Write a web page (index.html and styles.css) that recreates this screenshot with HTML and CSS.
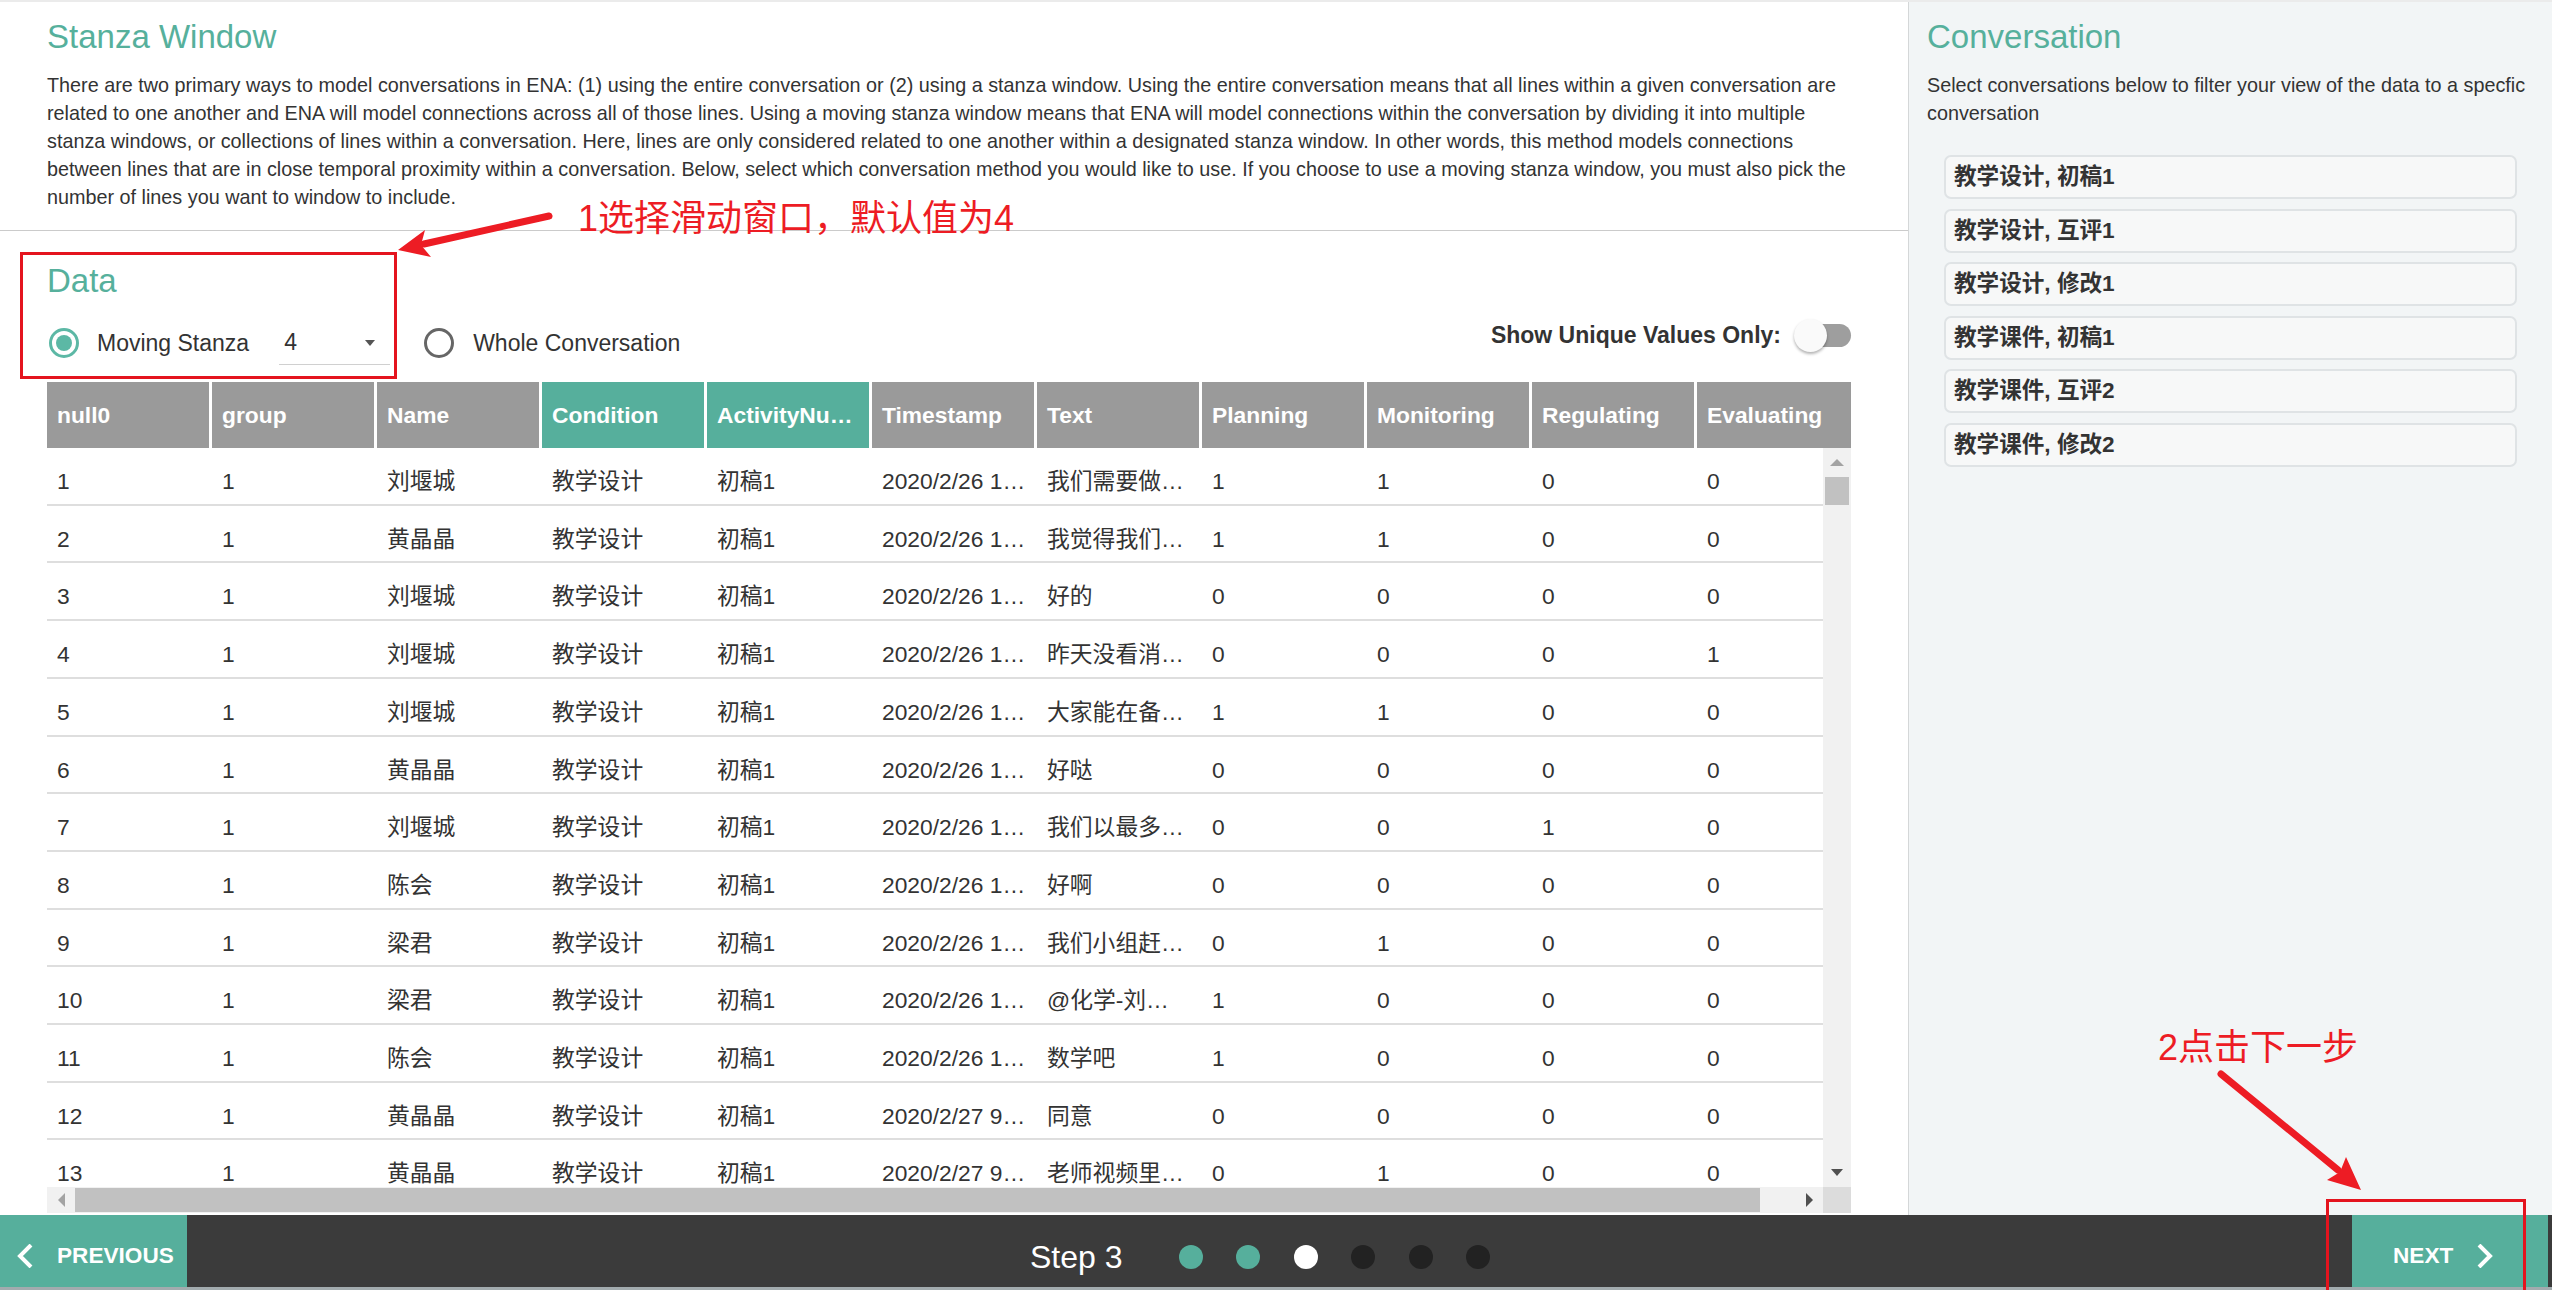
FILE: index.html
```html
<!DOCTYPE html>
<html lang="en">
<head>
<meta charset="utf-8">
<title>Stanza Window</title>
<link rel="stylesheet" href="styles.css">
</head>
<body>
<div class="app">
  <div class="main">
    <div class="left">
      <section class="intro-section">
        <h2 class="section-title">Stanza Window</h2>
        <p class="intro">There are two primary ways to model conversations in ENA: (1) using the entire conversation or (2) using a stanza window. Using the entire conversation means that all lines within a given conversation are related to one another and ENA will model connections across all of those lines. Using a moving stanza window means that ENA will model connections within the conversation by dividing it into multiple stanza windows, or collections of lines within a conversation. Here, lines are only considered related to one another within a designated stanza window. In other words, this method models connections between lines that are in close temporal proximity within a conversation. Below, select which conversation method you would like to use. If you choose to use a moving stanza window, you must also pick the number of lines you want to window to include.</p>
      </section>
      <hr class="divider">
      <section class="data-section">
        <h2 class="section-title">Data</h2>
        <div class="controls">
          <div class="mode-group">
            <label class="radio radio-checked"><span class="radio-ring"></span><span class="radio-label">Moving Stanza</span></label>
            <div class="select"><span class="select-value">4</span><span class="caret"></span></div>
            <label class="radio radio-whole"><span class="radio-ring"></span><span class="radio-label">Whole Conversation</span></label>
          </div>
          <div class="unique-toggle">
            <span class="toggle-label">Show Unique Values Only:</span>
            <span class="switch"><span class="switch-thumb"></span></span>
          </div>
        </div>
        <div class="grid">
          <div class="grid-head">
            <div class="hcell">null0</div>
            <div class="hcell">group</div>
            <div class="hcell">Name</div>
            <div class="hcell hcell-active">Condition</div>
            <div class="hcell hcell-active">ActivityNu…</div>
            <div class="hcell">Timestamp</div>
            <div class="hcell">Text</div>
            <div class="hcell">Planning</div>
            <div class="hcell">Monitoring</div>
            <div class="hcell">Regulating</div>
            <div class="hcell">Evaluating</div>
          </div>
          <div class="grid-body">
            <div class="rows">
              <div class="row"><div class="cell">1</div><div class="cell">1</div><div class="cell">刘堰城</div><div class="cell">教学设计</div><div class="cell">初稿1</div><div class="cell">2020/2/26 1…</div><div class="cell">我们需要做…</div><div class="cell">1</div><div class="cell">1</div><div class="cell">0</div><div class="cell">0</div></div>
              <div class="row"><div class="cell">2</div><div class="cell">1</div><div class="cell">黄晶晶</div><div class="cell">教学设计</div><div class="cell">初稿1</div><div class="cell">2020/2/26 1…</div><div class="cell">我觉得我们…</div><div class="cell">1</div><div class="cell">1</div><div class="cell">0</div><div class="cell">0</div></div>
              <div class="row"><div class="cell">3</div><div class="cell">1</div><div class="cell">刘堰城</div><div class="cell">教学设计</div><div class="cell">初稿1</div><div class="cell">2020/2/26 1…</div><div class="cell">好的</div><div class="cell">0</div><div class="cell">0</div><div class="cell">0</div><div class="cell">0</div></div>
              <div class="row"><div class="cell">4</div><div class="cell">1</div><div class="cell">刘堰城</div><div class="cell">教学设计</div><div class="cell">初稿1</div><div class="cell">2020/2/26 1…</div><div class="cell">昨天没看消…</div><div class="cell">0</div><div class="cell">0</div><div class="cell">0</div><div class="cell">1</div></div>
              <div class="row"><div class="cell">5</div><div class="cell">1</div><div class="cell">刘堰城</div><div class="cell">教学设计</div><div class="cell">初稿1</div><div class="cell">2020/2/26 1…</div><div class="cell">大家能在备…</div><div class="cell">1</div><div class="cell">1</div><div class="cell">0</div><div class="cell">0</div></div>
              <div class="row"><div class="cell">6</div><div class="cell">1</div><div class="cell">黄晶晶</div><div class="cell">教学设计</div><div class="cell">初稿1</div><div class="cell">2020/2/26 1…</div><div class="cell">好哒</div><div class="cell">0</div><div class="cell">0</div><div class="cell">0</div><div class="cell">0</div></div>
              <div class="row"><div class="cell">7</div><div class="cell">1</div><div class="cell">刘堰城</div><div class="cell">教学设计</div><div class="cell">初稿1</div><div class="cell">2020/2/26 1…</div><div class="cell">我们以最多…</div><div class="cell">0</div><div class="cell">0</div><div class="cell">1</div><div class="cell">0</div></div>
              <div class="row"><div class="cell">8</div><div class="cell">1</div><div class="cell">陈会</div><div class="cell">教学设计</div><div class="cell">初稿1</div><div class="cell">2020/2/26 1…</div><div class="cell">好啊</div><div class="cell">0</div><div class="cell">0</div><div class="cell">0</div><div class="cell">0</div></div>
              <div class="row"><div class="cell">9</div><div class="cell">1</div><div class="cell">梁君</div><div class="cell">教学设计</div><div class="cell">初稿1</div><div class="cell">2020/2/26 1…</div><div class="cell">我们小组赶…</div><div class="cell">0</div><div class="cell">1</div><div class="cell">0</div><div class="cell">0</div></div>
              <div class="row"><div class="cell">10</div><div class="cell">1</div><div class="cell">梁君</div><div class="cell">教学设计</div><div class="cell">初稿1</div><div class="cell">2020/2/26 1…</div><div class="cell">@化学-刘…</div><div class="cell">1</div><div class="cell">0</div><div class="cell">0</div><div class="cell">0</div></div>
              <div class="row"><div class="cell">11</div><div class="cell">1</div><div class="cell">陈会</div><div class="cell">教学设计</div><div class="cell">初稿1</div><div class="cell">2020/2/26 1…</div><div class="cell">数学吧</div><div class="cell">1</div><div class="cell">0</div><div class="cell">0</div><div class="cell">0</div></div>
              <div class="row"><div class="cell">12</div><div class="cell">1</div><div class="cell">黄晶晶</div><div class="cell">教学设计</div><div class="cell">初稿1</div><div class="cell">2020/2/27 9…</div><div class="cell">同意</div><div class="cell">0</div><div class="cell">0</div><div class="cell">0</div><div class="cell">0</div></div>
              <div class="row"><div class="cell">13</div><div class="cell">1</div><div class="cell">黄晶晶</div><div class="cell">教学设计</div><div class="cell">初稿1</div><div class="cell">2020/2/27 9…</div><div class="cell">老师视频里…</div><div class="cell">0</div><div class="cell">1</div><div class="cell">0</div><div class="cell">0</div></div>
            </div>
            <div class="vscroll">
              <span class="arrow-up"></span>
              <span class="vthumb"></span>
              <span class="vspacer"></span>
              <span class="arrow-down"></span>
            </div>
          </div>
          <div class="hscroll">
            <span class="harrow"><span class="arrow-left"></span></span>
            <span class="hthumb"></span>
            <span class="harrow harrow-right"><span class="arrow-right"></span></span>
            <span class="hcorner"></span>
          </div>
        </div>
      </section>
    </div>
    <aside class="right">
      <h2 class="section-title">Conversation</h2>
      <p class="conv-desc">Select conversations below to filter your view of the data to a specfic conversation</p>
      <ul class="conv-list">
        <li class="conv-item">教学设计, 初稿1</li>
        <li class="conv-item">教学设计, 互评1</li>
        <li class="conv-item">教学设计, 修改1</li>
        <li class="conv-item">教学课件, 初稿1</li>
        <li class="conv-item">教学课件, 互评2</li>
        <li class="conv-item">教学课件, 修改2</li>
      </ul>
    </aside>
  </div>
  <footer class="footer">
    <a class="nav-btn nav-prev">
      <svg class="chev" width="16" height="24" viewBox="0 0 16 24"><polyline points="14,1 3,12 14,23" fill="none" stroke="#fff" stroke-width="4"/></svg>
      <span>PREVIOUS</span>
    </a>
    <div class="steps">
      <span class="step-label">Step 3</span>
      <span class="dot dot-done"></span>
      <span class="dot dot-done"></span>
      <span class="dot dot-current"></span>
      <span class="dot"></span>
      <span class="dot"></span>
      <span class="dot"></span>
    </div>
    <a class="nav-btn nav-next">
      <span>NEXT</span>
      <svg class="chev" width="16" height="24" viewBox="0 0 16 24"><polyline points="2,1 13,12 2,23" fill="none" stroke="#fff" stroke-width="4"/></svg>
    </a>
  </footer>

  <div class="annotations">
    <svg class="anno-svg" width="2552" height="1290" viewBox="0 0 2552 1290">
      <line x1="549" y1="216" x2="424" y2="244" stroke="#ed1c24" stroke-width="7" stroke-linecap="round"/>
      <polygon points="398,250 425,230 421,245 431,257" fill="#ed1c24"/>
      <line x1="2221" y1="1074" x2="2338" y2="1170" stroke="#ed1c24" stroke-width="7" stroke-linecap="round"/>
      <polygon points="2361,1190 2327,1180 2340,1172 2346,1157" fill="#ed1c24"/>
    </svg>
    <div class="anno-box anno-box-data"></div>
    <div class="anno-box anno-box-next"></div>
    <div class="anno-text anno-text-1">1选择滑动窗口，默认值为4</div>
    <div class="anno-text anno-text-2">2点击下一步</div>
  </div>
</div>
</body>
</html>
```

FILE: styles.css
```css
* { box-sizing: border-box; }

html, body {
  margin: 0;
  padding: 0;
  width: 2552px;
  height: 1290px;
  overflow: hidden;
  background: #fff;
  font-family: "Liberation Sans", Arial, "Noto Sans CJK SC", sans-serif;
  color: #333;
}

.app {
  position: relative;
  width: 2552px;
  height: 1290px;
  display: flex;
  flex-direction: column;
}

.main {
  display: flex;
  height: 1215px;
  border-top: 2px solid #ebebeb;
}

/* ---------- left panel ---------- */
.left {
  width: 1908px;
  flex: none;
  background: #fff;
}

.section-title {
  margin: 0;
  font-size: 33px;
  line-height: 36px;
  font-weight: 400;
  color: #56b09c;
}

.intro-section {
  padding: 17px 57px 0 47px;
}

.intro {
  margin: 16px 0 0;
  font-size: 19.8px;
  line-height: 28px;
  color: #333;
}

.divider {
  margin: 19px 0 0;
  border: 0;
  border-top: 1px solid #cbcbcb;
  height: 0;
}

.data-section {
  padding: 32px 57px 0 47px;
}

.controls {
  margin-top: 17px;
  height: 50px;
  display: flex;
  justify-content: space-between;
  align-items: flex-start;
}

.mode-group {
  margin-top: 5px;
  height: 44px;
  display: flex;
  align-items: center;
  font-size: 23px;
}

.radio {
  display: flex;
  align-items: center;
}

.radio-checked { margin-left: 2px; }
.radio-whole { margin-left: 34px; }

.radio-ring {
  width: 30px;
  height: 30px;
  border-radius: 50%;
  border: 3px solid #666;
  display: flex;
  align-items: center;
  justify-content: center;
}

.radio-checked .radio-ring {
  border-color: #5cb8a5;
}

.radio-checked .radio-ring::after {
  content: "";
  width: 16px;
  height: 16px;
  border-radius: 50%;
  background: #5cb8a5;
}

.radio-label {
  margin-left: 18px;
  color: #333;
}

.radio-whole .radio-label { margin-left: 19px; }

.select {
  margin-left: 30px;
  width: 111px;
  height: 44px;
  border-bottom: 1px solid #d0d0d0;
  display: flex;
  align-items: center;
  justify-content: space-between;
  padding: 0 15px 0 5px;
  color: #333;
}

.caret {
  width: 0;
  height: 0;
  border-left: 5px solid transparent;
  border-right: 5px solid transparent;
  border-top: 6px solid #555;
}

.unique-toggle {
  height: 38px;
  display: flex;
  align-items: center;
}

.toggle-label {
  font-size: 23px;
  font-weight: 700;
  color: #333;
  margin-right: 15px;
}

.switch {
  position: relative;
  width: 55px;
  height: 23px;
  border-radius: 12px;
  background: #9e9e9e;
}

.switch-thumb {
  position: absolute;
  left: -2px;
  top: -5px;
  width: 33px;
  height: 33px;
  border-radius: 50%;
  background: #fafafa;
  box-shadow: 0 2px 3px rgba(0, 0, 0, 0.3);
}

/* ---------- grid ---------- */
.grid {
  margin-top: 16px;
  width: 1804px;
}

.grid-head {
  display: flex;
  width: 1804px;
  height: 66px;
  overflow: hidden;
}

.hcell {
  flex: none;
  width: 165px;
  height: 66px;
  border-right: 3px solid #fff;
  background: #9a9a9a;
  color: #fff;
  font-weight: 700;
  font-size: 22.8px;
  line-height: 66px;
  padding-left: 10px;
  white-space: nowrap;
  overflow: hidden;
}

.hcell-active { background: #56af9c; }

.grid-body {
  display: flex;
  height: 739px;
}

.rows {
  width: 1776px;
  height: 739px;
  overflow: hidden;
}

.row {
  display: flex;
  width: 1815px;
  border-bottom: 2px solid #dedede;
}

.cell {
  flex: none;
  width: 165px;
  padding: 12px 10px 0 10px;
  line-height: 43.7px;
  font-size: 22.8px;
  color: #333;
  white-space: nowrap;
  overflow: hidden;
}

.vscroll {
  width: 28px;
  height: 739px;
  background: #f1f1f1;
  display: flex;
  flex-direction: column;
  align-items: center;
}

.arrow-up {
  margin-top: 11px;
  width: 0;
  height: 0;
  border-left: 7px solid transparent;
  border-right: 7px solid transparent;
  border-bottom: 7px solid #a3a3a3;
}

.vthumb {
  margin-top: 11px;
  width: 24px;
  height: 28px;
  background: #c1c1c1;
}

.vspacer { flex: 1; }

.arrow-down {
  margin-bottom: 11px;
  width: 0;
  height: 0;
  border-left: 6px solid transparent;
  border-right: 6px solid transparent;
  border-top: 7px solid #505050;
}

.hscroll {
  display: flex;
  height: 26px;
  background: #f1f1f1;
  align-items: center;
}

.harrow {
  width: 28px;
  height: 26px;
  display: flex;
  align-items: center;
  justify-content: center;
}

.arrow-left {
  width: 0;
  height: 0;
  border-top: 7px solid transparent;
  border-bottom: 7px solid transparent;
  border-right: 7px solid #a3a3a3;
}

.arrow-right {
  width: 0;
  height: 0;
  border-top: 7px solid transparent;
  border-bottom: 7px solid transparent;
  border-left: 7px solid #505050;
}

.hthumb {
  width: 1685px;
  height: 24px;
  background: #c1c1c1;
}

.harrow-right { margin-left: 35px; }

.hcorner {
  width: 28px;
  height: 26px;
  background: #dcdcdc;
}

/* ---------- right panel ---------- */
.right {
  flex: 1;
  background: #f2f5f6;
  border-left: 1px solid #d4d7d8;
  padding: 17px 17px 0 18px;
}

.conv-desc {
  margin: 16px 0 0;
  font-size: 19.8px;
  line-height: 28px;
  color: #333;
}

.conv-list {
  list-style: none;
  margin: 28px 0 0;
  padding: 0 0 0 17px;
}

.conv-item {
  width: 573px;
  height: 44px;
  margin-bottom: 9.6px;
  border: 2px solid #dfe3e5;
  border-radius: 7px;
  background: #f7f8f8;
  padding-left: 8px;
  font-size: 22.6px;
  font-weight: 700;
  line-height: 40px;
  color: #333;
}

/* ---------- footer ---------- */
.footer {
  height: 75px;
  display: flex;
  background: #3b3b3b;
  border-bottom: 3px solid #a2abae;
  padding-right: 4px;
}

.nav-btn {
  display: flex;
  align-items: center;
  background: #56af9c;
  color: #fff;
  font-weight: 700;
  font-size: 22.6px;
  text-decoration: none;
  padding-top: 9px;
}

.nav-prev {
  width: 187px;
  padding-left: 17px;
}

.nav-prev .chev { margin-right: 24px; }

.nav-next {
  width: 196px;
  padding-left: 41px;
  margin-left: auto;
}

.nav-next .chev { margin-left: 24px; }

.steps {
  margin-left: 843px;
  padding-top: 12px;
  display: flex;
  align-items: center;
}

.step-label {
  font-size: 32px;
  color: #fff;
  margin-right: 56px;
}

.dot {
  width: 24px;
  height: 24px;
  border-radius: 50%;
  background: #222;
  margin-right: 33.5px;
}

.dot-done { background: #56af9c; }
.dot-current { background: #fff; }

/* ---------- annotations ---------- */
.annotations {
  position: absolute;
  left: 0;
  top: 0;
  width: 2552px;
  height: 1290px;
  pointer-events: none;
}

.anno-svg {
  position: absolute;
  left: 0;
  top: 0;
}

.anno-box {
  position: absolute;
  border: 3px solid #e4141e;
}

.anno-box-data {
  left: 20px;
  top: 252px;
  width: 377px;
  height: 127px;
}

.anno-box-next {
  left: 2326px;
  top: 1199px;
  width: 200px;
  height: 120px;
}

.anno-text {
  position: absolute;
  font-family: "Liberation Sans", "Noto Sans CJK SC", sans-serif;
  font-size: 36px;
  line-height: 14px;
  color: #ed1c24;
  white-space: nowrap;
}

.anno-text-1 {
  left: 578px;
  top: 212px;
}

.anno-text-2 {
  left: 2158px;
  top: 1041px;
}
```
